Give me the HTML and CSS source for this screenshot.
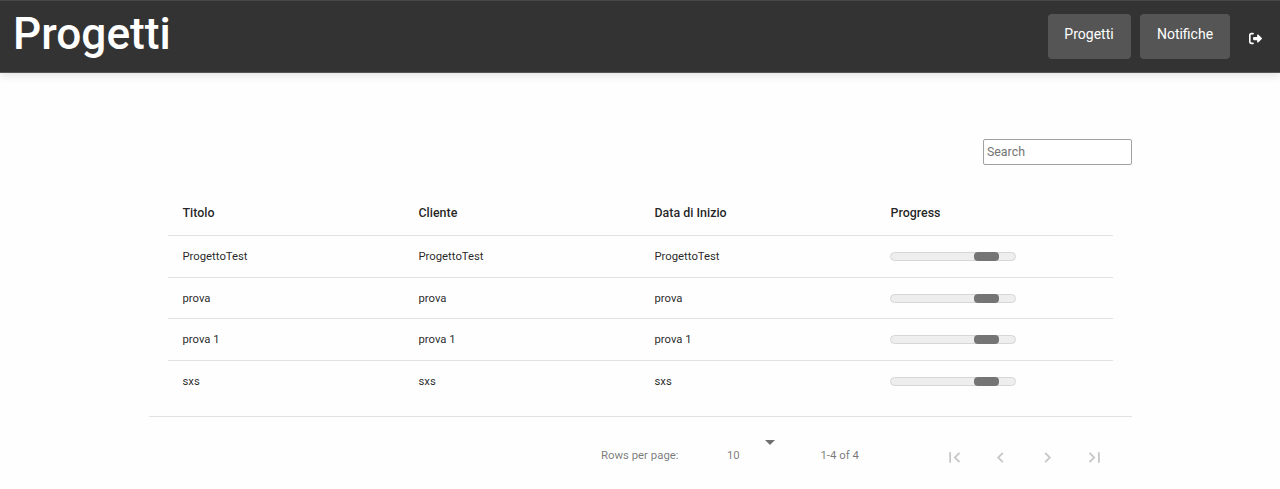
FILE: index.html
```html
<!DOCTYPE html>
<html lang="it">
<head>
<meta charset="utf-8">
<title>Progetti</title>
<link rel="stylesheet" href="styles.css">
</head>
<body>
<header class="topbar">
  <h1 class="title">Progetti</h1>
  <nav class="nav">
    <a class="nav-button">Progetti</a>
    <a class="nav-button notifications">Notifiche</a>
    <a class="logout" aria-label="Esci">
      <svg width="13" height="13" viewBox="0 0 512 512"><path fill="#fff" d="M502.600 278.600c12.500-12.500 12.500-32.800 0-45.300l-128-128c-9.200-9.200-22.900-11.900-34.900-6.900S320 115.100 320 128v64H192c-17.700 0-32 14.300-32 32v64c0 17.700 14.300 32 32 32h128v64c0 12.900 7.800 24.600 19.800 29.600s25.700 2.200 34.900-6.900l128-128zM160 96c17.700 0 32-14.300 32-32s-14.300-32-32-32H96C43 32 0 75 0 128v256c0 53 43 96 96 96h64c17.700 0 32-14.300 32-32s-14.300-32-32-32H96c-17.700 0-32-14.300-32-32V128c0-17.700 14.300-32 32-32h64z"/></svg>
    </a>
  </nav>
</header>
<main class="content">
  <div class="search-row"><input class="search" type="text" placeholder="Search"></div>
  <div class="table">
    <div class="row head"><span>Titolo</span><span>Cliente</span><span>Data di Inizio</span><span>Progress</span></div>
    <div class="row"><span>ProgettoTest</span><span>ProgettoTest</span><span>ProgettoTest</span><div class="progress"><i class="bar"></i></div></div>
    <div class="row"><span>prova</span><span>prova</span><span>prova</span><div class="progress"><i class="bar"></i></div></div>
    <div class="row"><span>prova 1</span><span>prova 1</span><span>prova 1</span><div class="progress"><i class="bar"></i></div></div>
    <div class="row"><span>sxs</span><span>sxs</span><span>sxs</span><div class="progress"><i class="bar"></i></div></div>
  </div>
  <footer class="pagination">
    <span class="rows-label">Rows per page:</span>
    <span class="rows-value">10</span>
    <svg class="caret" width="10" height="5" viewBox="0 0 10 5"><path d="M0 0h10L5 5z" fill="#707070"/></svg>
    <span class="range">1-4 of 4</span>
    <div class="pager">
      <svg width="21" height="21" viewBox="0 0 24 24"><path d="M18.410 16.590L13.820 12l4.590-4.590L17 6l-6 6 6 6zM6 6h2v12H6z"/></svg>
      <svg width="21" height="21" viewBox="0 0 24 24"><path d="M15.410 7.410L14 6l-6 6 6 6 1.410-1.410L10.830 12z"/></svg>
      <svg width="21" height="21" viewBox="0 0 24 24"><path d="M10 6L8.590 7.410 13.170 12l-4.580 4.590L10 18l6-6z"/></svg>
      <svg width="21" height="21" viewBox="0 0 24 24"><path d="M5.590 7.410L10.180 12l-4.590 4.590L7 18l6-6-6-6zM16 6h2v12h-2z"/></svg>
    </div>
  </footer>
</main>
</body>
</html>
```
FILE: styles.css
```css
* { box-sizing: border-box; }
body {
  margin: 0;
  background: #fefefe;
  color: rgba(0, 0, 0, 0.87);
  font-family: Roboto, sans-serif;
}
.topbar {
  display: flex;
  justify-content: space-between;
  align-items: flex-start;
  height: 73px;
  padding: 0 17px 0 13px;
  border-top: 1px solid #484848;
  border-bottom: 1px solid #555;
  background: #333;
  box-shadow: 0 2px 9px rgba(0, 0, 0, 0.12);
}
.title {
  margin: 7px 0 0;
  color: #fff;
  font-size: 44.200px;
  font-weight: 500;
  line-height: 52px;
}
.nav { display: flex; padding-top: 13px; }
.nav-button {
  width: 83px;
  height: 45px;
  margin-right: 9.500px;
  border-radius: 4px;
  background: #555;
  color: #fff;
  font-size: 14px;
  line-height: 40px;
  text-align: center;
}
.notifications { width: 90px; margin-right: 19px; }
.logout { display: flex; width: 14px; padding-top: 18px; }
.content { width: 983px; margin-left: 149.400px; }
.search-row { display: flex; justify-content: flex-end; padding-top: 66px; }
.search {
  width: 149px;
  height: 26px;
  margin-right: 0.500px;
  padding: 0 3px 1px;
  border: 1px solid #a0a0a0;
  border-radius: 2px;
  background: #fff;
  font: 12.400px Roboto, sans-serif;
}
.search::placeholder { color: #757575; }
.table { padding: 25px 19.500px 26px 19px; }
.row {
  display: grid;
  grid-template-columns: repeat(4, 236px);
  align-items: center;
  height: 41.700px;
  padding-left: 14.100px;
  border-bottom: 1px solid #e2e2e2;
  font-size: 11.300px;
}
.row:last-child { border-bottom: 0; }
.head { height: 46px; font-size: 12.450px; font-weight: 500; }
.progress {
  width: 126px;
  height: 9px;
  border: 1px solid #d6d6d6;
  border-radius: 5px;
  background: #eee;
}
.bar {
  display: block;
  width: 25px;
  height: 9px;
  margin: -1px 0 0 83px;
  border-radius: 4px;
  background: #757575;
}
.pagination {
  display: flex;
  align-items: center;
  height: 78px;
  margin-top: -13px;
  border-top: 1px solid #e2e2e2;
  color: rgba(0, 0, 0, 0.54);
  font-size: 11.400px;
}
.rows-label { width: 126px; margin-left: 451.500px; }
.rows-value { width: 38px; }
.caret { margin-bottom: 25px; }
.range { width: 78px; margin-left: 45.500px; }
.pager { display: flex; gap: 25.800px; margin: 4px 0 0 45.300px; fill: #c6c6c6; }
```
